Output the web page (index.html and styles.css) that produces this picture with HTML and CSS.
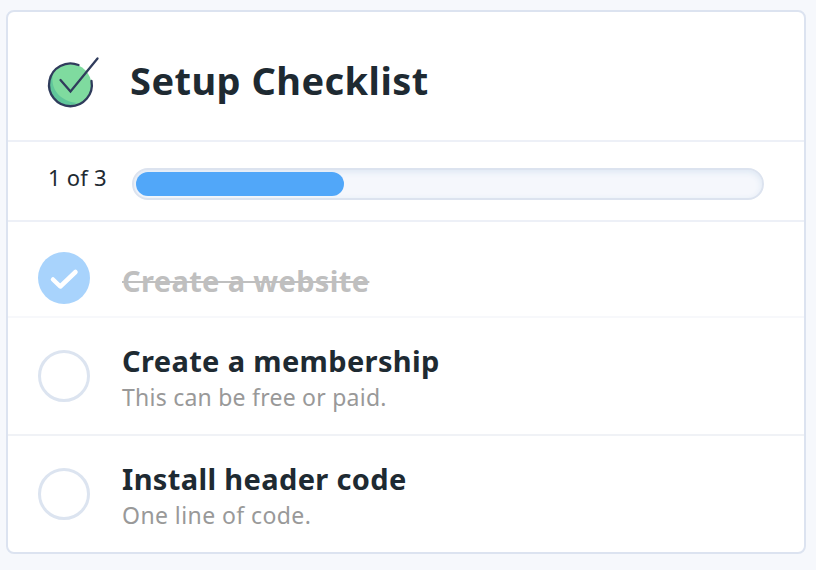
FILE: index.html
```
<!DOCTYPE html>
<html lang="en">
<head>
	<meta charset="UTF-8">
	<title>Setup Checklist</title>
	<link rel="stylesheet" href="styles.css">
</head>
<body>
	<div class="card">
		<div class="header">
			<svg class="logo" width="54" height="54" viewBox="0 0 54 54" fill="none">
				<circle cx="24.500" cy="30" r="21" fill="#7fdb9f"/>
				<path d="M7 19C4 33 13 46 31 48C17 55 3 46 3.500 31C3.500 26 5 22 7 19Z" fill="#60c69a"/>
				<path d="M32.500 10A21.400 21.400 0 1 0 45.500 26" stroke="#303c5c" stroke-width="2.300" stroke-linecap="round"/>
				<path d="M14.500 25L24.500 36.500L51.500 3.500" stroke="#303c5c" stroke-width="2.300" stroke-linecap="round"/>
			</svg>
			<h1>Setup Checklist</h1>
		</div>
		<div class="progress">
			<span class="count">1 of 3</span>
			<div class="bar">
				<div class="fill" style="width:33.33%"></div>
			</div>
		</div>
		<div class="item done">
			<div class="circle">
				<svg width="52" height="52" viewBox="0 0 52 52" fill="none">
					<path d="M15 27.500L22.300 34.500L37.500 20" stroke="#fff" stroke-width="4.500" stroke-linecap="round" stroke-linejoin="round"/>
				</svg>
			</div>
			<h2>Create a website</h2>
		</div>
		<div class="item">
			<div class="circle"></div>
			<div class="text">
				<h2>Create a membership</h2>
				<p>This can be free or paid.</p>
			</div>
		</div>
		<div class="item">
			<div class="circle"></div>
			<div class="text">
				<h2>Install header code</h2>
				<p class="short">One line of code.</p>
			</div>
		</div>
	</div>
</body>
</html>
```
FILE: styles.css
```
*{
	box-sizing: border-box;
}
body{
	margin: 0;
	padding: 10px 10px 16px 6px;
	background: #f6f8fc;
	color: #1e2a32;
	font-family: "Noto Sans", sans-serif;
}
h1,h2,p{
	margin: 0;
	white-space: nowrap;
}
.card{
	height: 544px;
	background: #fff;
	border: 2px solid #dce3f0;
	border-radius: 8px;
}
.header{
	display: flex;
	height: 130px;
	padding: 43px 0 0 38px;
	border-bottom: 2px solid #edf0f7;
}
.header h1{
	font-size: 38px;
	line-height: 50px;
	letter-spacing: 0.45px;
	margin-left: 30px;
}
.progress{
	display: flex;
	height: 80px;
	padding: 26px 40px 0;
	border-bottom: 2px solid #edf0f7;
}
.count{
	width: 84px;
	font-size: 22px;
	line-height: 19px;
	letter-spacing: 0.2px;
}
.bar{
	flex: 1;
	height: 32px;
	padding: 2px;
	background: #f5f7fc;
	border: 2px solid #dce3ef;
	border-radius: 16px;
	box-shadow: inset 0 2px 6px #dce7f3;
}
.fill{
	height: 24px;
	background: #51a7f9;
	border-radius: 12px;
}
.item{
	display: flex;
	height: 118px;
	padding: 24px 30px 0;
	border-bottom: 2px solid #f0f2f6;
}
.item:last-child{
	height: 116px;
	border-bottom: 0;
}
.circle{
	width: 52px;
	height: 52px;
	margin: 8px 32px 0 0;
	border: 3px solid #dce4f0;
	border-radius: 50%;
}
.text{
	margin-top: -1px;
}
.item h2{
	font-size: 29px;
	line-height: 40px;
	letter-spacing: 0.36px;
}
.item p{
	color: #999;
	font-size: 23px;
	line-height: 32px;
	letter-spacing: 0.24px;
}
.item .short{
	letter-spacing: 0.42px;
}
.done{
	height: 96px;
	border-color: #f7f8fb;
}
.done .circle{
	margin-top: 6px;
	background: #a8d3fc;
	border: 0;
}
.done h2{
	margin-top: 15px;
	color: #bfbfbf;
	text-decoration: line-through;
	text-decoration-thickness: 2px;
}
```
